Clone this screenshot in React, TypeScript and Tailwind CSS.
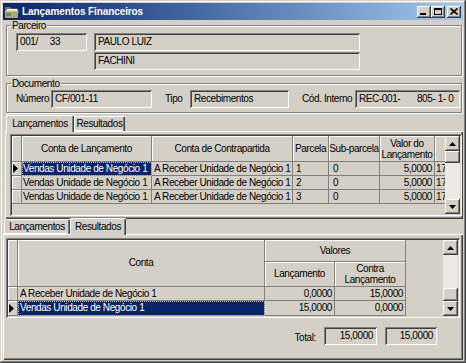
import React from 'react';

const raised = 'shadow-[inset_-1px_-1px_0_#404040,inset_1px_1px_0_#ffffff,inset_-2px_-2px_0_#808080]';
const sunken = 'shadow-[inset_1px_1px_0_#808080,inset_-1px_-1px_0_#ffffff,inset_2px_2px_0_#404040,inset_-2px_-2px_0_#d4d0c8]';
const etched = 'border border-[#808080] shadow-[inset_1px_1px_0_#ffffff,1px_1px_0_#ffffff]';
const fixedCell = 'shadow-[inset_1px_1px_0_#ffffff] border-r border-b border-[#808080] shrink-0';
const dataCell = 'border-r border-b border-[#808080] shrink-0 flex items-center whitespace-nowrap overflow-hidden';
const selected = 'bg-[#0a246a] text-white outline-1 outline-dotted outline-[#c0c0c0] -outline-offset-1';

function Field({ className = '', children }: { className?: string; children?: React.ReactNode }) {
  return (
    <div className={`h-[18px] shrink-0 flex items-center pl-[4px] pr-[4px] whitespace-pre ${sunken} ${className}`}>
      {children}
    </div>
  );
}

function Arrow({ dir }: { dir: 'up' | 'down' }) {
  return (
    <div className={`w-[15px] h-[15px] shrink-0 bg-[#d4d0c8] flex items-center justify-center ${raised}`}>
      <svg width="7" height="4" viewBox="0 0 7 4">
        <path d={dir === 'up' ? 'M3.5 0L7 4H0Z' : 'M0 0H7L3.5 4Z'} fill="#000" />
      </svg>
    </div>
  );
}

function VScroll({ thumbAtTop }: { thumbAtTop: boolean }) {
  return (
    <div className="w-[15px] shrink-0 flex flex-col">
      <Arrow dir="up" />
      {thumbAtTop && <div className={`h-[12px] shrink-0 bg-[#d4d0c8] ${raised}`} />}
      <div className="flex-1 bg-[#ebe9e4]" />
      {!thumbAtTop && <div className={`h-[13px] shrink-0 bg-[#d4d0c8] ${raised}`} />}
      <Arrow dir="down" />
    </div>
  );
}

function Pointer() {
  return (
    <svg width="5" height="9" viewBox="0 0 5 9">
      <path d="M0 0L5 4.5L0 9Z" fill="#000" />
    </svg>
  );
}

function Tab({ active, className = '', children }: { active?: boolean; className?: string; children: React.ReactNode }) {
  if (active) {
    return (
      <div
        className={`h-[17px] shrink-0 bg-[#d4d0c8] flex items-center justify-center shadow-[inset_1px_1px_0_#ffffff,inset_-1px_0_0_#404040,inset_-2px_0_0_#808080] ${className}`}
      >
        {children}
      </div>
    );
  }
  return (
    <div
      className={`h-[15px] shrink-0 flex items-center justify-center shadow-[inset_1px_1px_0_#ffffff,inset_-1px_0_0_#404040,inset_-2px_0_0_#808080,inset_0_-1px_0_#ffffff] ${className}`}
    >
      {children}
    </div>
  );
}

const panel = 'shadow-[inset_1px_1px_0_#ffffff,inset_-1px_-1px_0_#404040,inset_-2px_-2px_0_#808080]';

const launches = [
  { parcela: '1' },
  { parcela: '2' },
  { parcela: '3' },
];

export default function App() {
  return (
    <div className="w-[466px] h-[363px] bg-[#d4d0c8] p-[3px] flex flex-col text-[10px] tracking-[-0.4px] leading-none text-black font-['Liberation_Sans',Arial,sans-serif] shadow-[inset_-1px_-1px_0_#404040,inset_1px_1px_0_#d4d0c8,inset_-2px_-2px_0_#808080,inset_2px_2px_0_#ffffff] overflow-hidden">
      {/* title bar */}
      <div className="h-[17px] shrink-0 flex items-center bg-linear-to-r from-[#0a246a] to-[#a6caf0] pr-[2px]">
        <svg width="16" height="16" viewBox="0 0 16 16" className="ml-[1px] shrink-0">
          <path d="M1 3H6L7 4.5H14V14H1Z" fill="#7a7a52" />
          <rect x="3" y="5" width="10" height="7" fill="#f4f4ee" />
          <path d="M1 7H14.5L13.5 14H1Z" fill="#a8a878" />
          <path d="M1 7H14.5" stroke="#d8d8b8" strokeWidth="1" />
          <rect x="2" y="9" width="5" height="3" fill="#6c8c4c" />
        </svg>
        <span className="ml-[2px] text-white font-bold tracking-[-0.1px] text-[10px]">Lançamentos Financeiros</span>
        <div className="ml-auto flex items-center">
          <div className={`w-[14px] h-[12px] bg-[#d4d0c8] ${raised} flex items-end pl-[3px] pb-[3px]`}>
            <div className="w-[6px] h-[2px] bg-black" />
          </div>
          <div className={`w-[14px] h-[12px] bg-[#d4d0c8] ${raised} flex items-center justify-center`}>
            <div className="w-[8px] h-[7px] border border-black border-t-2 -mt-[1px]" />
          </div>
          <div className={`ml-[2px] w-[14px] h-[12px] bg-[#d4d0c8] ${raised} flex items-center justify-center`}>
            <svg width="8" height="7" viewBox="0 0 8 7" className="-mt-[1px]">
              <path d="M0.5 0.5L7.5 6.5M7.5 0.5L0.5 6.5" stroke="#000" strokeWidth="1.6" />
            </svg>
          </div>
        </div>
      </div>

      {/* Parceiro */}
      <fieldset className={`ml-[3px] mr-[1px] pt-[2px] pb-[5px] ${etched}`}>
        <legend className="ml-[4px] px-[1px] leading-[11px] bg-[#d4d0c8]">Parceiro</legend>
        <div className="flex pl-[9px] gap-[7px]">
          <Field className="w-[71px]">{'001/     33'}</Field>
          <div className="flex flex-col gap-[1px]">
            <Field className="w-[266px]">PAULO LUIZ</Field>
            <Field className="w-[266px]">FACHINI</Field>
          </div>
        </div>
      </fieldset>

      {/* Documento */}
      <fieldset className={`mt-[2px] ml-[3px] mr-[1px] pt-[1px] pb-[4px] ${etched}`}>
        <legend className="ml-[4px] px-[1px] leading-[11px] bg-[#d4d0c8]">Documento</legend>
        <div className="flex items-center pl-[9px]">
          <span className="w-[35px] shrink-0">Número</span>
          <Field className="w-[101px]">CF/001-11</Field>
          <span className="ml-[13px] w-[25px] shrink-0">Tipo</span>
          <Field className="w-[99px]">Recebimentos</Field>
          <span className="ml-[13px] w-[53px] shrink-0">Cód. Interno</span>
          <Field className="w-[105px]">{'REC-001-       805- 1- 0'}</Field>
        </div>
      </fieldset>

      {/* first tab control */}
      <div className="mt-[2px] h-[17px] shrink-0 flex items-end pl-[3px] relative z-10 -mb-px">
        <Tab active className="w-[68px] bg-[#d4d0c8]">Lançamentos</Tab>
        <Tab className="w-[51px] mb-[1px]">Resultados</Tab>
      </div>
      <div className={`ml-[2px] h-[88px] shrink-0 pt-[3px] pl-[5px] pr-[1px] ${panel}`}>
        <div className={`h-[82px] p-[2px] flex ${sunken}`}>
          <div className="flex-1 flex flex-col overflow-hidden">
            <div className="flex h-[26px] shrink-0">
              <div className={`w-[10px] ${fixedCell}`} />
              <div className={`w-[130px] ${fixedCell} flex items-center justify-center`}>Conta de Lançamento</div>
              <div className={`w-[141px] ${fixedCell} flex items-center justify-center`}>Conta de Contrapartida</div>
              <div className={`w-[36px] ${fixedCell} flex items-center justify-center`}>Parcela</div>
              <div className={`w-[51px] ${fixedCell} flex items-center justify-center`}>Sub-parcela</div>
              <div className={`w-[55px] ${fixedCell} flex flex-col items-center justify-center leading-[11px]`}>
                <span>Valor do</span>
                <span>Lançamento</span>
              </div>
              <div className={`w-[12px] ${fixedCell}`} />
            </div>
            {launches.map((row, i) => (
              <div key={i} className="flex h-[14px] shrink-0">
                <div className={`w-[10px] ${fixedCell} flex items-center pl-[1px]`}>{i === 0 && <Pointer />}</div>
                <div className={`w-[130px] ${dataCell} pl-[1px] ${i === 0 ? selected : ''}`}>Vendas Unidade de Negócio 1</div>
                <div className={`w-[141px] ${dataCell} pl-[2px]`}>A Receber Unidade de Negócio 1</div>
                <div className={`w-[36px] ${dataCell} pl-[3px]`}>{row.parcela}</div>
                <div className={`w-[51px] ${dataCell} pl-[4px]`}>0</div>
                <div className={`w-[55px] ${dataCell} justify-end pr-[2px]`}>5,0000</div>
                <div className={`w-[12px] ${dataCell} pl-[1px]`}>17</div>
              </div>
            ))}
          </div>
          <VScroll thumbAtTop />
        </div>
      </div>

      {/* second tab control */}
      <div className="h-[16px] shrink-0 flex items-end pl-[1px] relative z-10 -mb-px">
        <Tab className="w-[66px] mb-[1px]">Lançamentos</Tab>
        <Tab active className="w-[56px] bg-[#d4d0c8]">Resultados</Tab>
      </div>
      <div className={`flex-1 flex flex-col pt-[4px] pl-[3px] pr-[3px] ${panel}`}>
        <div className={`h-[80px] shrink-0 p-[2px] flex ${sunken}`}>
          <div className="flex-1 flex flex-col overflow-hidden">
            <div className="flex h-[47px] shrink-0">
              <div className={`w-[10px] ${fixedCell}`} />
              <div className={`w-[247px] ${fixedCell} flex items-center justify-center`}>Conta</div>
              <div className="w-[141px] shrink-0 flex flex-col">
                <div className={`h-[22px] ${fixedCell} flex items-center justify-center`}>Valores</div>
                <div className="flex flex-1">
                  <div className={`w-[70px] ${fixedCell} flex items-center justify-center`}>Lançamento</div>
                  <div className={`w-[71px] ${fixedCell} flex flex-col items-center justify-center leading-[11px]`}>
                    <span>Contra</span>
                    <span>Lançamento</span>
                  </div>
                </div>
              </div>
            </div>
            <div className="flex h-[14px] shrink-0">
              <div className={`w-[10px] ${fixedCell}`} />
              <div className={`w-[247px] ${dataCell} pl-[2px]`}>A Receber Unidade de Negócio 1</div>
              <div className={`w-[70px] ${dataCell} justify-end pr-[2px]`}>0,0000</div>
              <div className={`w-[71px] ${dataCell} justify-end pr-[2px]`}>15,0000</div>
            </div>
            <div className="flex h-[15px] shrink-0">
              <div className={`w-[10px] ${fixedCell} flex items-center pl-[1px]`}>
                <Pointer />
              </div>
              <div className={`w-[247px] ${dataCell} pl-[2px] ${selected}`}>Vendas Unidade de Negócio 1</div>
              <div className={`w-[70px] ${dataCell} justify-end pr-[2px]`}>15,0000</div>
              <div className={`w-[71px] ${dataCell} justify-end pr-[2px]`}>0,0000</div>
            </div>
          </div>
          <VScroll thumbAtTop={false} />
        </div>
        <div className="mt-[9px] flex items-end">
          <span className="ml-auto mr-[8px] pb-[2px]">Total:</span>
          <Field className="w-[53px] justify-end">15,0000</Field>
          <Field className="ml-[8px] mr-[23px] w-[52px] justify-end">15,0000</Field>
        </div>
      </div>
    </div>
  );
}
